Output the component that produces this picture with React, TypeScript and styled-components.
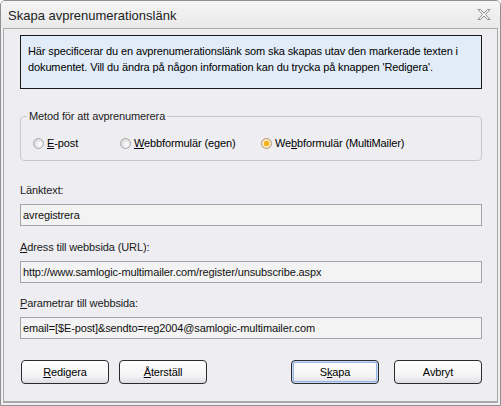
import React from "react";
import styled, { createGlobalStyle } from "styled-components";

const GlobalStyle = createGlobalStyle`
  html, body {
    margin: 0;
    padding: 0;
    background: #ffffff;
  }
  body {
    font-family: "Liberation Sans", Arial, sans-serif;
    font-size: 11px;
    letter-spacing: -0.12px;
    color: #000;
  }
`;

const Window = styled.div`
  width: 501px;
  height: 406px;
  box-sizing: border-box;
  display: flex;
  flex-direction: column;
  background: #f0f0f3;
  border: 1px solid #8e8f8f;
  border-radius: 5px 5px 0 0;
  overflow: hidden;
`;

const TitleBar = styled.div`
  height: 27px;
  flex: none;
  display: flex;
  align-items: center;
  justify-content: space-between;
  padding: 0 9px 0 7px;
  background: linear-gradient(#f5f5f5, #e9e9e9);
`;

const Title = styled.span`
  font-size: 13px;
  letter-spacing: 0;
  color: #222;
  padding-top: 1px;
`;

const Body = styled.div`
  flex: 1;
  display: flex;
  flex-direction: column;
  margin: 0 2px 2px 2px;
  padding: 6px 15px 0 16px;
  background: #eeeef2;
  border: 1px solid #a9a9a9;
  border-bottom-width: 2px;
`;

const InfoBox = styled.div`
  height: 54px;
  box-sizing: border-box;
  border: 1px solid #1a1a1a;
  background: #e1ecf8;
  padding: 7px 7px 0 7px;
  line-height: 16px;
`;

const Group = styled.fieldset`
  margin: 21px 0 0 0;
  padding: 13px 0 0 12px;
  height: 51px;
  box-sizing: border-box;
  border: 1px solid #c9c9c4;
  border-radius: 4px;
  display: flex;
`;

const Legend = styled.legend`
  padding: 0 2px;
  margin-left: -6px;
  color: #222;
`;

const RadioLabel = styled.label<{ $width?: number }>`
  display: flex;
  align-items: center;
  gap: 3px;
  width: ${(p) => (p.$width ? `${p.$width}px` : "auto")};
  height: 16px;
`;

const RadioDot = styled.span<{ $checked?: boolean }>`
  width: 11px;
  height: 11px;
  border-radius: 50%;
  box-sizing: border-box;
  border: 1px solid ${(p) => (p.$checked ? "#b8946a" : "#a8a8a8")};
  background: ${(p) =>
    p.$checked
      ? "radial-gradient(circle, #f5b21a 0 2.6px, #fde9a8 3px, #f4e6d6 4px, #e9d7c3 100%)"
      : "radial-gradient(circle at 60% 60%, #f6f6f6 0 2px, #e2e2e2 4px, #cfcfcf 100%)"};
`;

const FieldLabel = styled.div<{ $top: number }>`
  margin-top: ${(p) => p.$top}px;
  line-height: 14px;
  color: #1a1a1a;
`;

const Field = styled.div`
  margin-top: 7px;
  height: 22px;
  box-sizing: border-box;
  border: 1px solid #a5a5a5;
  background: #f3f3f3;
  padding: 0 0 0 2px;
  display: flex;
  align-items: center;
  color: #111;
`;

const ButtonRow = styled.div`
  margin-top: 21px;
  display: flex;
  align-items: center;
`;

const Button = styled.button<{ $primary?: boolean; $gap?: number }>`
  width: 88px;
  height: 24px;
  margin-left: ${(p) => p.$gap ?? 0}px;
  font-family: "Liberation Sans", Arial, sans-serif;
  font-size: 11px;
  letter-spacing: -0.12px;
  color: #000;
  border: 1px solid #2b2b2b;
  border-radius: 4px;
  background: linear-gradient(#ffffff, #f3f3f3 70%, #dcdce4);
  box-shadow: ${(p) =>
    p.$primary ? "inset 0 0 0 1px #c8d8f4, inset 0 0 0 2px #98b4e4" : "none"};
  padding: 0;
`;

const Spacer = styled.div`
  flex: 1;
`;

const Key = styled.u`
  text-underline-offset: 1px;
`;

const CloseIcon = () => (
  <svg width="14" height="13" viewBox="0 0 14 13">
    <path
      d="M1 1.5 L3.5 1.5 L7 5 L10.5 1.5 L13 1.5 L8.5 6.5 L13 11.5 L10.5 11.5 L7 8 L3.5 11.5 L1 11.5 L5.5 6.5 Z"
      fill="#fafafa"
      stroke="#8a8a8a"
      strokeWidth="1"
      strokeLinejoin="round"
    />
  </svg>
);

export default function App() {
  return (
    <>
      <GlobalStyle />
      <Window>
        <TitleBar>
          <Title>Skapa avprenumerationslänk</Title>
          <CloseIcon />
        </TitleBar>
        <Body>
          <InfoBox>
            Här specificerar du en avprenumerationslänk som ska skapas utav den markerade texten i
            <br />
            dokumentet. Vill du ändra på någon information kan du trycka på knappen 'Redigera'.
          </InfoBox>

          <Group>
            <Legend>Metod för att avprenumerera</Legend>
            <RadioLabel $width={87}>
              <RadioDot />
              <span>
                <Key>E</Key>-post
              </span>
            </RadioLabel>
            <RadioLabel $width={141}>
              <RadioDot />
              <span>
                <Key>W</Key>ebbformulär (egen)
              </span>
            </RadioLabel>
            <RadioLabel>
              <RadioDot $checked />
              <span>
                We<Key>b</Key>bformulär (MultiMailer)
              </span>
            </RadioLabel>
          </Group>

          <FieldLabel $top={22}>Länktext:</FieldLabel>
          <Field>avregistrera</Field>

          <FieldLabel $top={14}>
            <Key>A</Key>dress till webbsida (URL):
          </FieldLabel>
          <Field>http://www.samlogic-multimailer.com/register/unsubscribe.aspx</Field>

          <FieldLabel $top={13}>
            <Key>P</Key>arametrar till webbsida:
          </FieldLabel>
          <Field>email=[$E-post]&amp;sendto=reg2004@samlogic-multimailer.com</Field>

          <ButtonRow>
            <Button $gap={1}>
              <Key>R</Key>edigera
            </Button>
            <Button $gap={10}>
              <Key>Å</Key>terställ
            </Button>
            <Spacer />
            <Button $primary>
              S<Key>k</Key>apa
            </Button>
            <Button $gap={15}>Avbryt</Button>
          </ButtonRow>
        </Body>
      </Window>
    </>
  );
}
